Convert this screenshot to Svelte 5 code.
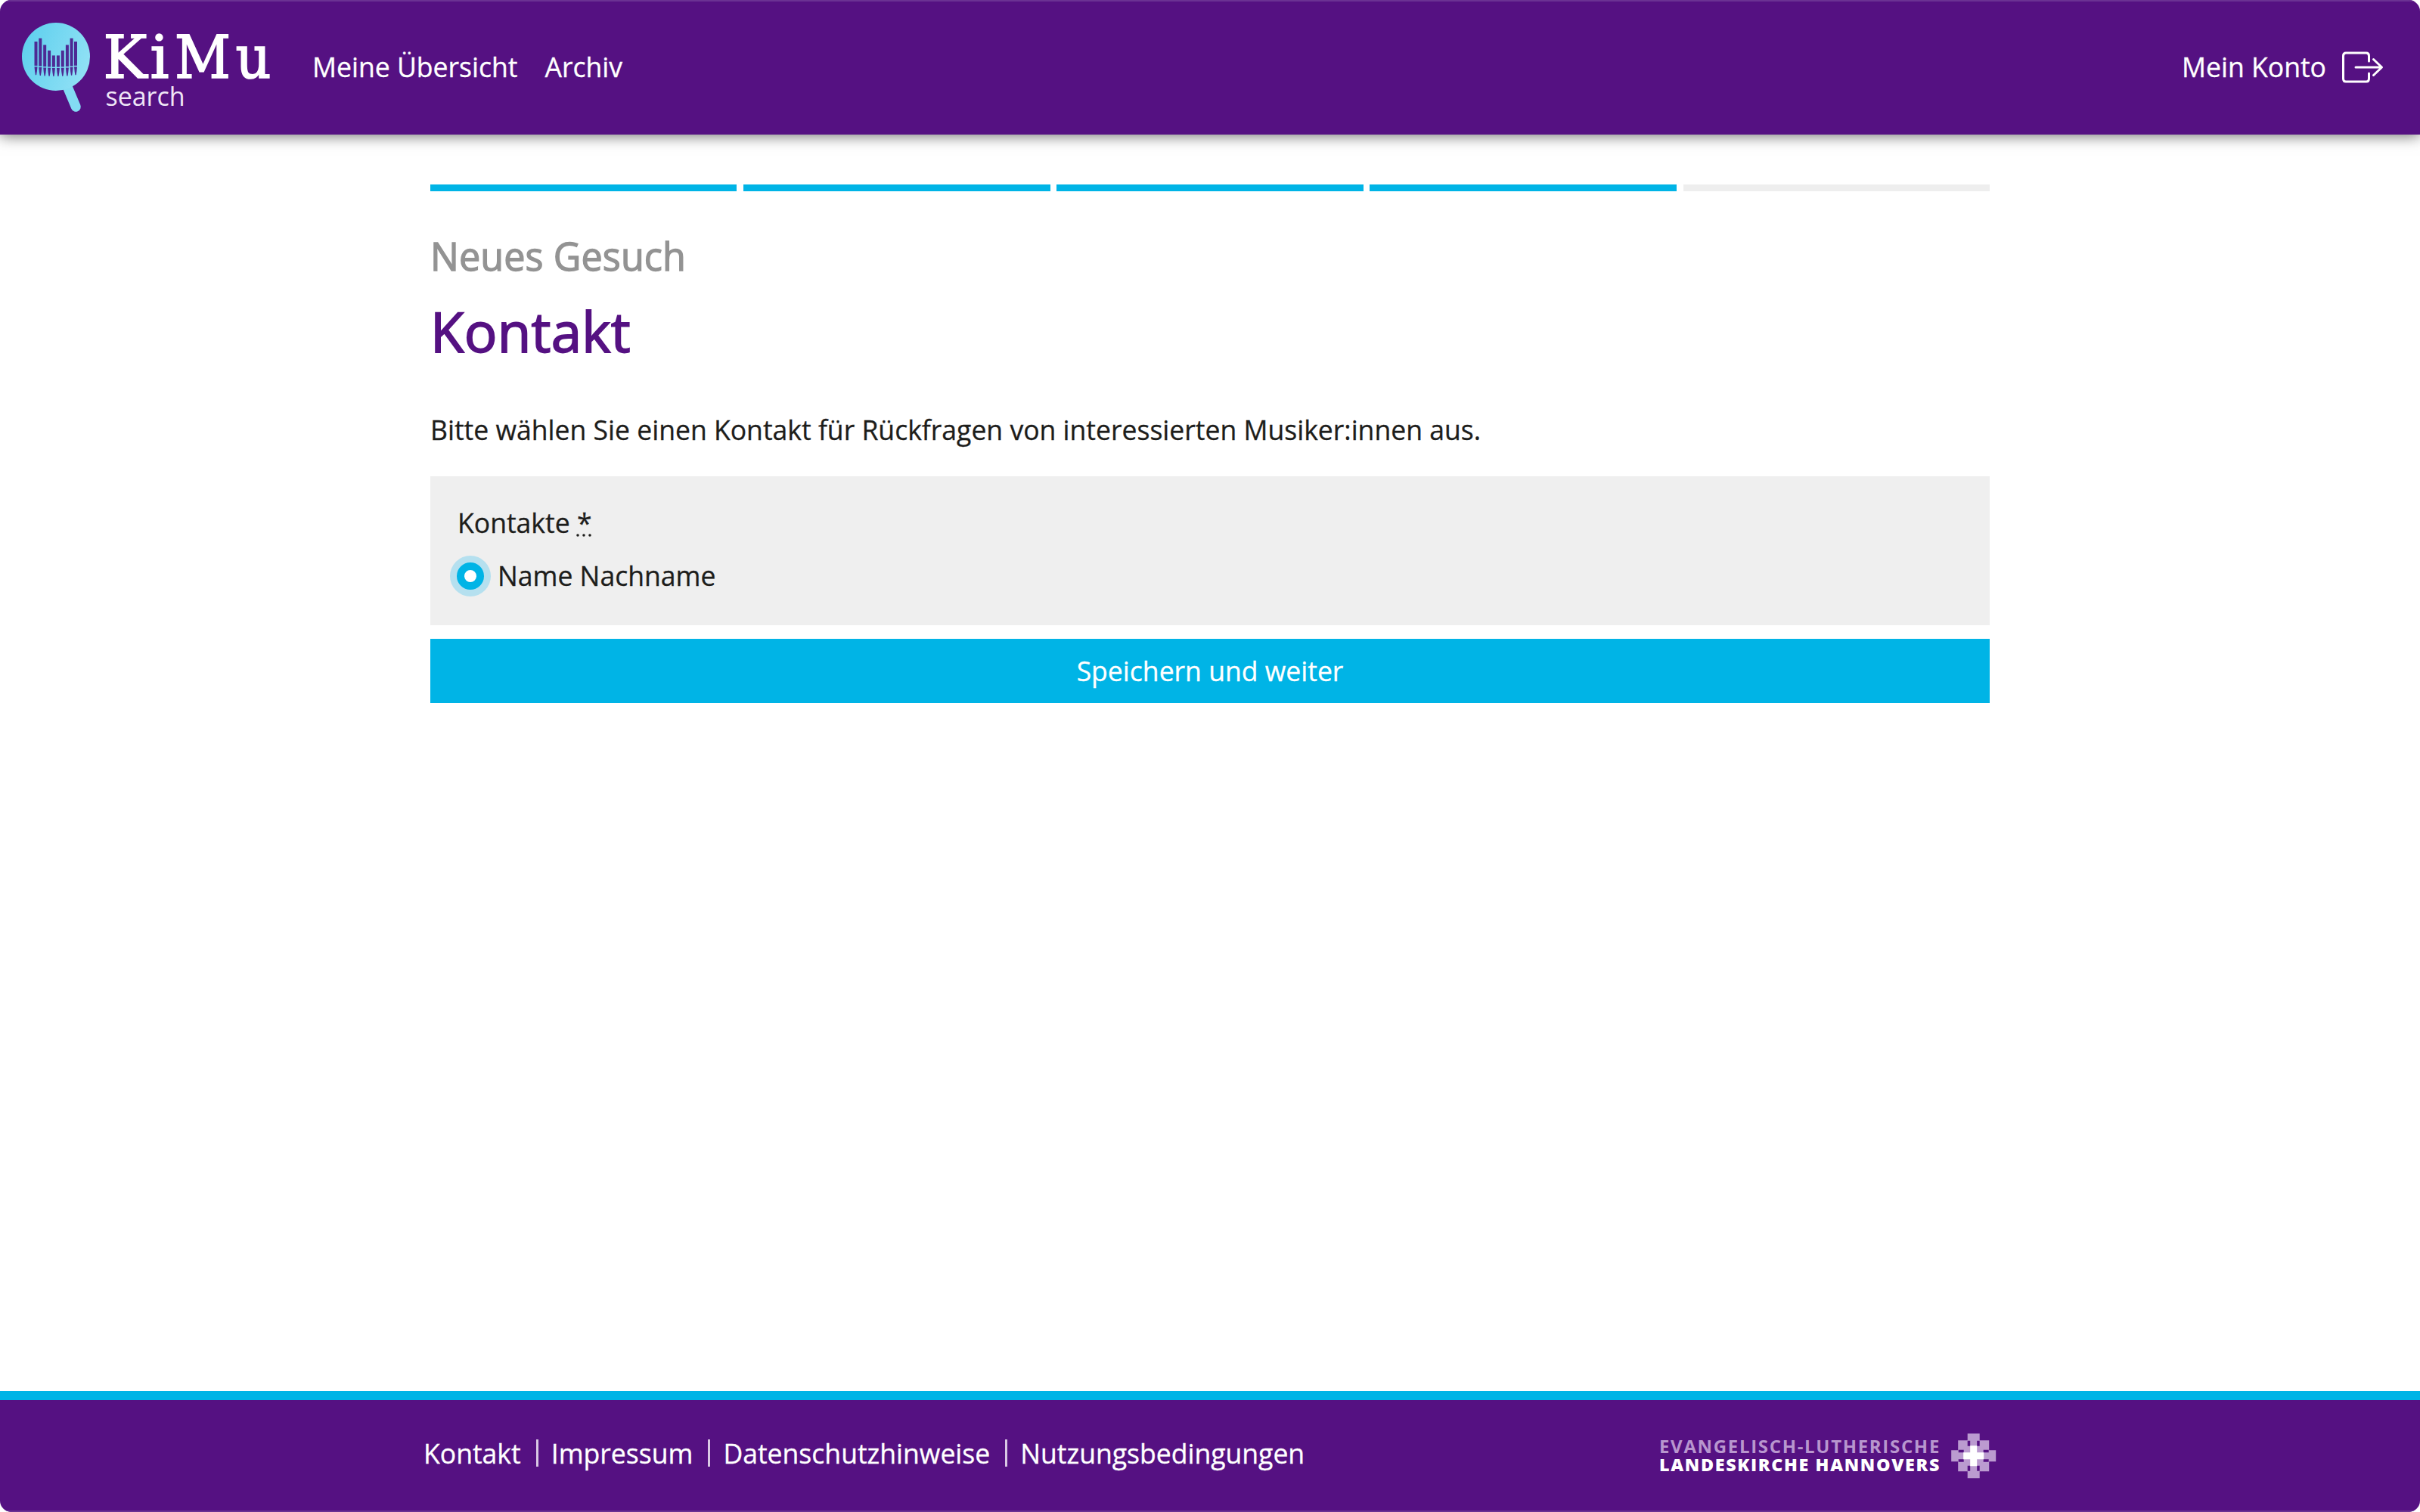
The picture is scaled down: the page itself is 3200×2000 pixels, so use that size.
<script>
	const steps = 5;
	const currentStep = 4;

	const navLinks = ['Meine Übersicht', 'Archiv'];
	const footerLinks = ['Kontakt', 'Impressum', 'Datenschutzhinweise', 'Nutzungsbedingungen'];
	const contacts = [{ id: 1, name: 'Name Nachname' }];

	let selected = $state(1);

	// organ pipes in the logo: left edge and top
	const pipes = [
		[45.5, 55],
		[51.3, 50.6],
		[57.2, 59.4],
		[63.1, 66.8],
		[68.9, 73.4],
		[74.9, 73.4],
		[80.8, 66.8],
		[86.9, 59.4],
		[92.6, 50.6],
		[98, 55]
	];

	function pipeBottom(x) {
		return 88.6 - Math.pow((x - 71.5) / 28, 2) * 2;
	}
</script>

<div class="page">
	<header>
		<a class="logo" href="#start" aria-label="KiMu search">
			<svg width="370" height="178" viewBox="0 0 370 178">
				<defs>
					<linearGradient id="lens" x1="0" y1="0.3" x2="1" y2="0.7">
						<stop offset="0" stop-color="#5fd0ee" />
						<stop offset="1" stop-color="#92e1f5" />
					</linearGradient>
				</defs>
				<path d="M88 112 L100.3 141.3" stroke="#83dcf3" stroke-width="13" stroke-linecap="round" />
				<circle cx="74" cy="75" r="45" fill="url(#lens)" />
				{#each pipes as [x, top] (x)}
					<rect {x} y={top} width="4" height={pipeBottom(x) - top} fill="#4d2a94" />
					<path d="M{x} {pipeBottom(x) + 1.4}h4l-.6 6l-.8 5h-1.2l-.8 -5z" fill="#4d2a94" />
				{/each}
				<g class="wordmark">
					<text x="136.5" y="103" textLength="58" lengthAdjust="spacingAndGlyphs">K</text>
					<text x="198.5" y="103" textLength="25" lengthAdjust="spacingAndGlyphs">i</text>
					<text x="231" y="103" textLength="74" lengthAdjust="spacingAndGlyphs">M</text>
					<text x="311.5" y="103" textLength="47" lengthAdjust="spacingAndGlyphs">u</text>
				</g>
				<text class="sub" x="139.5" y="139.7" textLength="105">search</text>
			</svg>
		</a>
		<nav>
			{#each navLinks as link (link)}
				<a href="#nav">{link}</a>
			{/each}
		</nav>
		<div class="account">
			<a href="#konto">Mein Konto</a>
			<svg width="56" height="44" viewBox="0 0 56 44" fill="none" stroke="#fff" stroke-width="3" stroke-linecap="round" stroke-linejoin="round">
				<path d="M36.5 14V7Q36.5 3 33 3H6Q2.5 3 2.5 7V37Q2.5 41 6 41H33Q36.5 41 36.5 37V30" />
				<path d="M19 22H53M42.5 11.5L53.5 22L42.5 32.5" />
			</svg>
		</div>
	</header>

	<main>
		<div class="progress">
			{#each Array.from({ length: steps }) as _, i (i)}
				<span class:done={i < currentStep}></span>
			{/each}
		</div>
		<h2>Neues Gesuch</h2>
		<h1>Kontakt</h1>
		<p>Bitte wählen Sie einen Kontakt für Rückfragen von interessierten Musiker:innen aus.</p>
		<fieldset>
			<div class="legend">Kontakte <abbr title="erforderlich">*</abbr></div>
			{#each contacts as contact (contact.id)}
				<label>
					<input type="radio" name="contact" value={contact.id} bind:group={selected} />
					<span>{contact.name}</span>
				</label>
			{/each}
		</fieldset>
		<button type="button">Speichern und weiter</button>
	</main>

	<footer>
		<div class="footer-links">
			{#each footerLinks as link (link)}
				<a href="#footer">{link}</a>
			{/each}
		</div>
		<svg class="church" width="450" height="64" viewBox="0 0 450 64">
			<text class="line light" x="0" y="28.3" textLength="372" lengthAdjust="spacingAndGlyphs">EVANGELISCH-LUTHERISCHE</text>
			<text class="line" x="0" y="52.3" textLength="372" lengthAdjust="spacingAndGlyphs">LANDESKIRCHE HANNOVERS</text>
			<g transform="translate(415.7 31.7)">
				<path
					fill="#bb9bd0"
					d="M-8 -29.5H8V-20.5H20.5V-7.5H29.5V7.5H20.5V20.5H8V29.5H-8V20.5H-20.5V7.5H-29.5V-7.5H-20.5V-20.5H-8Z"
				/>
				<path
					fill="#551182"
					d="M-8 -20h3.5v7h-3.5zM4.5 -20h3.5v7h-3.5zM-8 13h3.5v7h-3.5zM4.5 13h3.5v7h-3.5zM-20 -8h7v3.5h-7zM13 -8h7v3.5h-7zM-20 4.5h7v3.5h-7zM13 4.5h7v3.5h-7z"
				/>
				<path fill="#fff" d="M-4.5 -13.5H4.5V-4.5H13.5V4.5H4.5V13.5H-4.5V4.5H-13.5V-4.5H-4.5Z" />
			</g>
		</svg>
	</footer>
</div>

<style>
	:global(body) {
		background: #fff;
	}
	.page {
		--purple: #551182;
		--cyan: #00b4e6;
		display: flex;
		flex-direction: column;
		height: 2000px;
		border-radius: 15px;
		overflow: hidden;
		font-family: 'Open Sans', 'Noto Sans', sans-serif;
		font-size: 35.55px;
		line-height: 50px;
		color: #1d1d1b;
		-webkit-text-stroke: 0.3px;
	}
	a {
		color: #fff;
		text-decoration: none;
	}
	header {
		display: flex;
		align-items: center;
		height: 178px;
		background: var(--purple);
		box-shadow:
			inset 0 2px 0 #6b3293,
			0 2px 18px rgba(0, 0, 0, 0.55);
	}
	.logo {
		width: 370px;
		height: 178px;
	}
	.wordmark {
		font-family: 'DejaVu Serif', serif;
		font-size: 78px;
		fill: #fff;
		stroke: #fff;
		stroke-width: 1.7px;
	}
	.sub {
		font-size: 34px;
		fill: #f0e6f7;
	}
	nav {
		display: flex;
		gap: 36px;
		margin-left: 43px;
		padding-bottom: 2px;
	}
	.account {
		display: flex;
		align-items: center;
		gap: 20px;
		margin-left: auto;
		margin-right: 48px;
	}
	.account a {
		padding-bottom: 2px;
	}
	main {
		flex: 1;
		width: 2062px;
		margin: 0 auto;
		padding-top: 66px;
	}
	.progress {
		display: grid;
		grid-template-columns: repeat(5, 1fr);
		gap: 8.7px;
		height: 9px;
	}
	.progress span {
		background: #eee;
	}
	.progress span.done {
		background: var(--cyan);
	}
	h1,
	h2 {
		margin: 0;
		font-weight: 500;
	}
	h2 {
		margin-top: 51px;
		font-size: 50.3px;
		line-height: 70px;
		letter-spacing: 0.1px;
		color: #939393;
		-webkit-text-stroke: 1.3px;
	}
	h1 {
		margin-top: 14px;
		font-size: 72.6px;
		line-height: 100px;
		letter-spacing: 0.3px;
		color: var(--purple);
		-webkit-text-stroke: 1.8px;
	}
	p {
		margin: 55px 0 37px;
	}
	fieldset {
		height: 197px;
		box-sizing: border-box;
		margin: 0 0 18px;
		padding: 36px;
		border: 0;
		background: #efefef;
	}
	abbr {
		text-decoration: underline dotted;
	}
	label {
		display: flex;
		align-items: center;
		gap: 18px;
		margin-top: 20px;
		margin-left: -1px;
	}
	label span {
		padding-bottom: 1px;
	}
	input {
		appearance: none;
		width: 36px;
		height: 36px;
		margin: 0;
		border-radius: 50%;
		background: #fff;
	}
	input:checked {
		border: 10px solid var(--cyan);
		box-shadow: 0 0 0 9px #b5e0ef;
	}
	button {
		display: block;
		width: 100%;
		height: 85px;
		padding: 0 0 2px;
		border: 0;
		background: var(--cyan);
		color: #fff;
		font: inherit;
	}
	footer {
		display: flex;
		justify-content: space-between;
		align-items: center;
		height: 160px;
		box-sizing: border-box;
		padding: 0 556px 0 560px;
		border-top: 12px solid var(--cyan);
		background: var(--purple);
		box-shadow: inset 0 -2px 0 #6b3293;
	}
	.footer-links {
		display: flex;
		align-items: center;
		padding-bottom: 8px;
	}
	.footer-links a {
		display: flex;
		align-items: center;
	}
	.footer-links a + a::before {
		content: '';
		width: 3px;
		height: 36px;
		margin: 0 17px 0 20px;
		background: #d9c8e4;
	}
	.line {
		font-size: 22.5px;
		font-weight: 800;
		letter-spacing: 1.6px;
		fill: #fff;
	}
	.line.light {
		font-weight: 700;
		fill: #b896ce;
	}
</style>
